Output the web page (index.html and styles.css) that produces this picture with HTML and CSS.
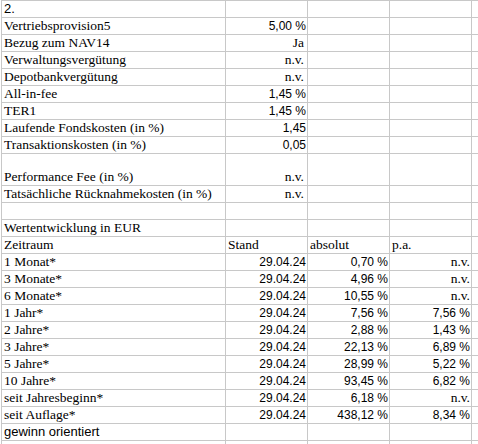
FILE: index.html
```html
<!DOCTYPE html>
<html lang="de">
<head>
<meta charset="utf-8">
<title>Fondsdaten</title>
<link rel="stylesheet" href="styles.css">
</head>
<body>
<div class="sheet">
  <div class="c sans">2.</div><div class="c"></div><div class="c"></div><div class="c"></div><div class="c"></div>

  <div class="c">Vertriebsprovision5</div><div class="c num">5,00 %</div><div class="c"></div><div class="c"></div><div class="c"></div>
  <div class="c">Bezug zum NAV14</div><div class="c txt">Ja</div><div class="c"></div><div class="c"></div><div class="c"></div>
  <div class="c">Verwaltungsvergütung</div><div class="c txt">n.v.</div><div class="c"></div><div class="c"></div><div class="c"></div>
  <div class="c">Depotbankvergütung</div><div class="c txt">n.v.</div><div class="c"></div><div class="c"></div><div class="c"></div>
  <div class="c">All-in-fee</div><div class="c num">1,45 %</div><div class="c"></div><div class="c"></div><div class="c"></div>
  <div class="c">TER1</div><div class="c num">1,45 %</div><div class="c"></div><div class="c"></div><div class="c"></div>
  <div class="c">Laufende Fondskosten (in %)</div><div class="c num">1,45</div><div class="c"></div><div class="c"></div><div class="c"></div>
  <div class="c">Transaktionskosten (in %)</div><div class="c num">0,05</div><div class="c"></div><div class="c"></div><div class="c"></div>

  <div class="c tall">Performance Fee (in %)</div><div class="c tall txt">n.v.</div><div class="c tall"></div><div class="c tall"></div><div class="c tall"></div>
  <div class="c">Tatsächliche Rücknahmekosten (in %)</div><div class="c txt">n.v.</div><div class="c"></div><div class="c"></div><div class="c"></div>
  <div class="c"></div><div class="c"></div><div class="c"></div><div class="c"></div><div class="c"></div>

  <div class="c">Wertentwicklung in EUR</div><div class="c"></div><div class="c"></div><div class="c"></div><div class="c"></div>
  <div class="c">Zeitraum</div><div class="c">Stand</div><div class="c">absolut</div><div class="c">p.a.</div><div class="c"></div>

  <div class="c">1 Monat*</div><div class="c num">29.04.24</div><div class="c num">0,70 %</div><div class="c txt2">n.v.</div><div class="c"></div>
  <div class="c">3 Monate*</div><div class="c num">29.04.24</div><div class="c num">4,96 %</div><div class="c txt2">n.v.</div><div class="c"></div>
  <div class="c">6 Monate*</div><div class="c num">29.04.24</div><div class="c num">10,55 %</div><div class="c txt2">n.v.</div><div class="c"></div>
  <div class="c">1 Jahr*</div><div class="c num">29.04.24</div><div class="c num">7,56 %</div><div class="c num">7,56 %</div><div class="c"></div>
  <div class="c">2 Jahre*</div><div class="c num">29.04.24</div><div class="c num">2,88 %</div><div class="c num">1,43 %</div><div class="c"></div>
  <div class="c">3 Jahre*</div><div class="c num">29.04.24</div><div class="c num">22,13 %</div><div class="c num">6,89 %</div><div class="c"></div>
  <div class="c">5 Jahre*</div><div class="c num">29.04.24</div><div class="c num">28,99 %</div><div class="c num">5,22 %</div><div class="c"></div>
  <div class="c">10 Jahre*</div><div class="c num">29.04.24</div><div class="c num">93,45 %</div><div class="c num">6,82 %</div><div class="c"></div>
  <div class="c">seit Jahresbeginn*</div><div class="c num">29.04.24</div><div class="c num">6,18 %</div><div class="c txt2">n.v.</div><div class="c"></div>
  <div class="c">seit Auflage*</div><div class="c num">29.04.24</div><div class="c num">438,12 %</div><div class="c num">8,34 %</div><div class="c"></div>

  <div class="c sans">gewinn orientiert</div><div class="c"></div><div class="c"></div><div class="c"></div><div class="c"></div>
  <div class="c"></div><div class="c"></div><div class="c"></div><div class="c"></div><div class="c"></div>
</div>
</body>
</html>
```

FILE: styles.css
```css
html, body {
  margin: 0;
  padding: 0;
  background: #ffffff;
  overflow: hidden;
}

.sheet {
  margin-left: 1px;
  padding: 1px 0 0 1px;
  background: #c8c8c8;
  display: grid;
  grid-template-columns: 223px 81px 81px 81px 1fr;
  grid-auto-rows: auto;
  gap: 1px;
  font-family: "Liberation Serif", "Times New Roman", serif;
  font-size: 13.5px;
  color: #000000;
}

.c {
  background: #ffffff;
  display: flex;
  align-items: flex-end;
  height: 16px;
  padding: 0 1px 0 2px;
  line-height: 16px;
  white-space: nowrap;
  overflow: hidden;
}

.tall {
  height: 31px;
}

.sans {
  font-family: "Liberation Sans", Arial, sans-serif;
  font-size: 13px;
}

.num {
  justify-content: flex-end;
  font-family: "Liberation Sans", Arial, sans-serif;
  font-size: 12px;
}

.txt {
  justify-content: flex-end;
  padding-right: 3px;
}

.txt2 {
  justify-content: flex-end;
  padding-right: 1px;
}
```
